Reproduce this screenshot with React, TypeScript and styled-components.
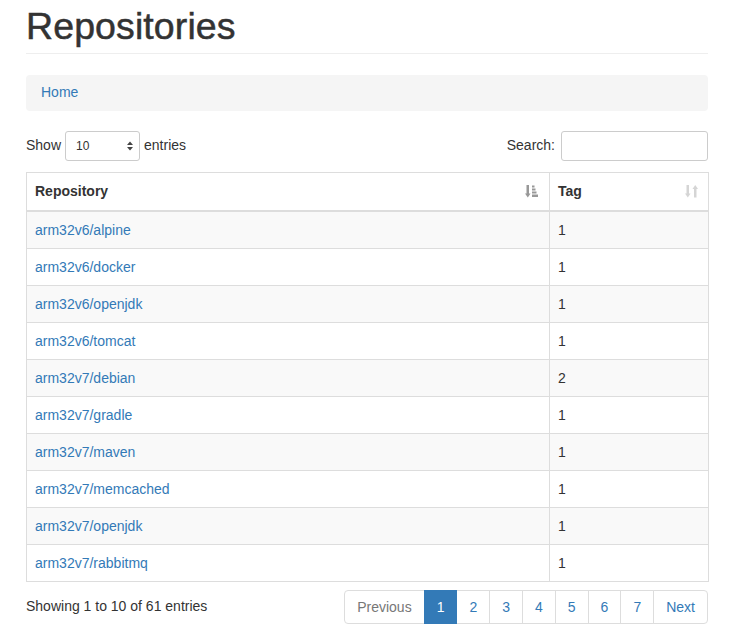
import React from 'react';
import styled, { createGlobalStyle } from 'styled-components';

const Global = createGlobalStyle`
  html, body { margin: 0; padding: 0; background: #fff; }
  body {
    font-family: "Liberation Sans", Arial, sans-serif;
    font-size: 14px;
    line-height: 1.42857;
    color: #333;
  }
  * { box-sizing: border-box; }
`;

const Container = styled.div`
  width: 682px;
  margin-left: 26px;
`;

const PageHeader = styled.div`
  padding-top: 6px;
  padding-bottom: 6px;
  border-bottom: 1px solid #eee;
  margin-bottom: 21px;
`;

const Title = styled.h1`
  margin: 0;
  font-size: 37.5px;
  font-weight: 500;
  line-height: 41px;
  color: #333;
  -webkit-text-stroke: 0.5px #333;
  letter-spacing: 0.1px;
`;

const Breadcrumb = styled.div`
  background: #f5f5f5;
  border-radius: 4px;
  padding: 8px 15px;
  margin-bottom: 20px;
`;

const Link = styled.a`
  color: #337ab7;
  text-decoration: none;
`;

const Controls = styled.div`
  display: flex;
  justify-content: space-between;
  align-items: center;
  height: 30px;
  margin-bottom: 11px;
`;

const Label = styled.label`
  display: flex;
  align-items: center;
  gap: 4px;
  font-weight: 400;
`;

const SearchLabel = styled(Label)`
  gap: 6px;
`;

const SelectWrap = styled.span`
  position: relative;
  display: inline-block;
`;

const Select = styled.select`
  appearance: none;
  -webkit-appearance: none;
  width: 75px;
  height: 30px;
  padding: 5px 10px;
  font-family: inherit;
  font-size: 12px;
  color: #333;
  background: #fff;
  border: 1px solid #ccc;
  border-radius: 3px;
`;

const SelectArrows = styled.svg`
  position: absolute;
  right: 7px;
  top: 10px;
  pointer-events: none;
`;

const SearchInput = styled.input`
  width: 147px;
  height: 30px;
  padding: 5px 10px;
  font-size: 12px;
  border: 1px solid #ccc;
  border-radius: 3px;
  background: #fff;
`;

const Table = styled.table`
  width: 682px;
  border-collapse: collapse;
  border-spacing: 0;
  border: 1px solid #ddd;
  table-layout: fixed;
`;

const Th = styled.th<{ $w: number }>`
  width: ${p => p.$w}px;
  padding: 9px 8px 8px;
  text-align: left;
  font-weight: 700;
  border: 1px solid #ddd;
  border-bottom: 2px solid #ddd;
  vertical-align: bottom;
`;

const ThInner = styled.div`
  display: flex;
  justify-content: space-between;
  align-items: center;
`;

const SortIcon = styled.svg<{ $active?: boolean }>`
  opacity: ${p => (p.$active ? 0.5 : 0.2)};
  margin-right: 1px;
`;

const Tr = styled.tr<{ $striped: boolean }>`
  background: ${p => (p.$striped ? '#f9f9f9' : '#fff')};
`;

const Td = styled.td`
  padding: 8px;
  border: 1px solid #ddd;
  line-height: 20px;
`;

const Footer = styled.div`
  display: flex;
  justify-content: space-between;
  align-items: flex-start;
  margin-top: 6px;
`;

const Info = styled.div`
  padding-top: 9px;
`;

const Pagination = styled.ul`
  display: flex;
  list-style: none;
  margin: 2px 0;
  padding: 0;
`;

const PageBtn = styled.li<{ $active?: boolean; $disabled?: boolean; $first?: boolean; $last?: boolean }>`
  padding: 6px 12px;
  line-height: 20px;
  margin-left: ${p => (p.$first ? 0 : -1)}px;
  border: 1px solid ${p => (p.$active ? '#337ab7' : '#ddd')};
  background: ${p => (p.$active ? '#337ab7' : '#fff')};
  color: ${p => (p.$active ? '#fff' : p.$disabled ? '#777' : '#337ab7')};
  border-radius: ${p => (p.$first ? '4px 0 0 4px' : p.$last ? '0 4px 4px 0' : '0')};
  position: relative;
  z-index: ${p => (p.$active ? 2 : 0)};
`;

const rows: [string, string][] = [
  ['arm32v6/alpine', '1'],
  ['arm32v6/docker', '1'],
  ['arm32v6/openjdk', '1'],
  ['arm32v6/tomcat', '1'],
  ['arm32v7/debian', '2'],
  ['arm32v7/gradle', '1'],
  ['arm32v7/maven', '1'],
  ['arm32v7/memcached', '1'],
  ['arm32v7/openjdk', '1'],
  ['arm32v7/rabbitmq', '1'],
];

const SortAttr = () => (
  <SortIcon $active width="15" height="15" viewBox="0 0 15 15">
    <g fill="#333">
      <rect x="1.5" y="1" width="2.5" height="9" />
      <polygon points="0,9.5 5.5,9.5 2.75,13.5" />
      <rect x="7" y="1.5" width="2.5" height="2" />
      <rect x="7" y="4.5" width="3.5" height="2" />
      <rect x="7" y="7.5" width="4.5" height="2" />
      <rect x="7" y="10.5" width="6" height="2.5" />
    </g>
  </SortIcon>
);

const SortBoth = () => (
  <SortIcon width="14" height="15" viewBox="0 0 14 15">
    <g fill="#333">
      <rect x="1.5" y="1" width="2.5" height="9" />
      <polygon points="0,9.5 5.5,9.5 2.75,13.5" />
      <rect x="9" y="4.5" width="2.5" height="9" />
      <polygon points="7.5,5 13,5 10.25,1" />
    </g>
  </SortIcon>
);

export default function App() {
  return (
    <>
      <Global />
      <Container>
        <PageHeader>
          <Title>Repositories</Title>
        </PageHeader>
        <Breadcrumb>
          <Link href="#">Home</Link>
        </Breadcrumb>
        <Controls>
          <Label>
            Show
            <SelectWrap>
              <Select defaultValue="10">
                <option>10</option>
                <option>25</option>
                <option>50</option>
                <option>100</option>
              </Select>
              <SelectArrows width="6" height="10" viewBox="0 0 6 10">
                <polygon points="0,4 6,4 3,0.5" fill="#444" />
                <polygon points="0,6 6,6 3,9.5" fill="#444" />
              </SelectArrows>
            </SelectWrap>
            entries
          </Label>
          <SearchLabel>
            Search:
            <SearchInput type="search" />
          </SearchLabel>
        </Controls>
        <Table>
          <thead>
            <tr>
              <Th $w={523}>
                <ThInner>
                  Repository
                  <SortAttr />
                </ThInner>
              </Th>
              <Th $w={159}>
                <ThInner>
                  Tag
                  <SortBoth />
                </ThInner>
              </Th>
            </tr>
          </thead>
          <tbody>
            {rows.map(([name, tag], i) => (
              <Tr key={name} $striped={i % 2 === 0}>
                <Td>
                  <Link href="#">{name}</Link>
                </Td>
                <Td>{tag}</Td>
              </Tr>
            ))}
          </tbody>
        </Table>
        <Footer>
          <Info>Showing 1 to 10 of 61 entries</Info>
          <Pagination>
            <PageBtn $first $disabled>Previous</PageBtn>
            <PageBtn $active>1</PageBtn>
            <PageBtn>2</PageBtn>
            <PageBtn>3</PageBtn>
            <PageBtn>4</PageBtn>
            <PageBtn>5</PageBtn>
            <PageBtn>6</PageBtn>
            <PageBtn>7</PageBtn>
            <PageBtn $last>Next</PageBtn>
          </Pagination>
        </Footer>
      </Container>
    </>
  );
}
